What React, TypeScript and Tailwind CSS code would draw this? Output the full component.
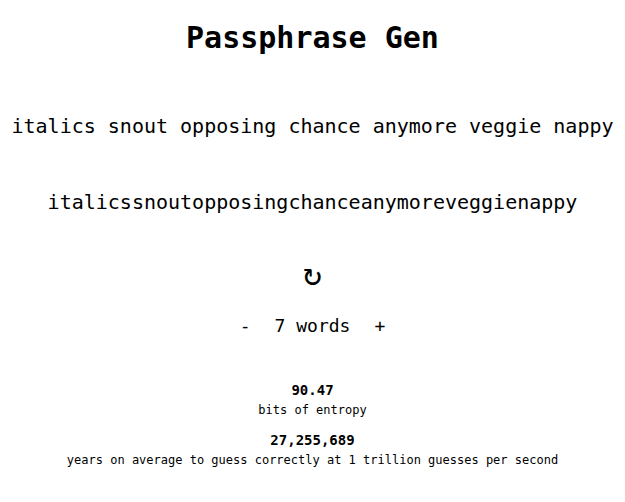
const mono = { fontFamily: '"DejaVu Sans Mono", monospace' };

export default function App() {
  const words = ['italics', 'snout', 'opposing', 'chance', 'anymore', 'veggie', 'nappy'];

  return (
    <div className="flex min-h-screen flex-col items-center bg-white text-black" style={mono}>
      <h1 className="mt-5 text-[30px] font-bold leading-9">Passphrase Gen</h1>
      <p className="mt-14 whitespace-nowrap text-xl leading-7">{words.join(' ')}</p>
      <p className="mt-12 whitespace-nowrap text-xl leading-7">{words.join('')}</p>
      <button className="mt-[42px] text-[32px] leading-8">↻</button>
      <div className="mt-[22px] flex items-center text-lg leading-7">
        <button className="px-1">-</button>
        <span className="mx-5">7 words</span>
        <button className="px-1">+</button>
      </div>
      <div className="mt-10 text-center">
        <div className="text-sm font-bold leading-5">90.47</div>
        <div className="text-xs leading-5">bits of entropy</div>
      </div>
      <div className="mt-2.5 text-center">
        <div className="text-sm font-bold leading-5">27,255,689</div>
        <div className="text-xs leading-5">years on average to guess correctly at 1 trillion guesses per second</div>
      </div>
    </div>
  );
}
